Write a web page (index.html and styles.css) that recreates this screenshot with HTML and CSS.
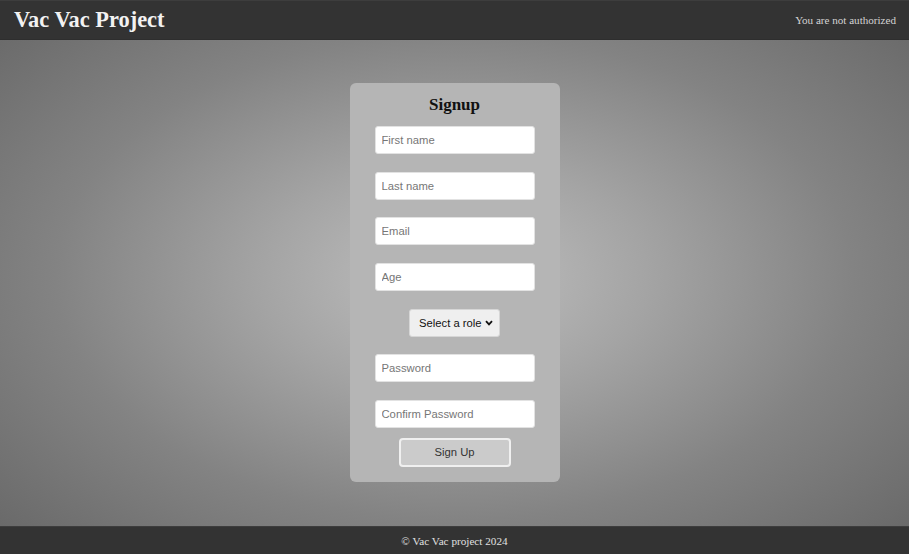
FILE: index.html
```html
<!DOCTYPE html>
<html lang="en">
<head>
<meta charset="utf-8">
<title>Vac Vac Project</title>
<link rel="stylesheet" href="styles.css">
</head>
<body>
<header class="topbar">
  <h1 class="brand">Vac Vac Project</h1>
  <span class="auth">You are not authorized</span>
</header>
<main class="content">
  <div class="card">
    <h2 class="card-title">Signup</h2>
    <form class="form">
      <input class="field" type="text" placeholder="First name">
      <input class="field" type="text" placeholder="Last name">
      <input class="field" type="email" placeholder="Email">
      <input class="field" type="number" placeholder="Age">
      <select class="role">
        <option>Select a role</option>
        <option>Admin</option>
        <option>User</option>
      </select>
      <input class="field" type="password" placeholder="Password">
      <input class="field" type="password" placeholder="Confirm Password">
      <button class="submit" type="button">Sign Up</button>
    </form>
  </div>
</main>
<footer class="footer">© Vac Vac project 2024</footer>
</body>
</html>
```

FILE: styles.css
```css
* { box-sizing: border-box; }
html, body { height: 100%; }
body {
  margin: 0;
  display: flex;
  flex-direction: column;
  font-family: "Liberation Serif", "Times New Roman", serif;
  background: radial-gradient(ellipse at center, #c0c0c0 0%, #a4a4a4 30%, #838383 62%, #666666 100%);
}
.topbar {
  height: 40px;
  flex: 0 0 40px;
  background: #333333;
  border-top: 1px solid #3d3d3d;
  border-bottom: 1px solid #2e2e2e;
  display: flex;
  align-items: center;
  justify-content: space-between;
  padding: 0 13px 0 14px;
}
.brand {
  margin: 0;
  font-size: 22.4px;
  font-weight: bold;
  color: #f2f2f2;
  line-height: 1;
}
.auth {
  font-size: 11.1px;
  color: #d4d4d4;
}
.content {
  flex: 1;
  display: flex;
  align-items: center;
  justify-content: center;
  padding-bottom: 1px;
}
.card {
  width: 210px;
  background: #b5b5b5;
  border-radius: 6px;
  padding: 11px 25px 15px;
  display: flex;
  flex-direction: column;
  align-items: center;
}
.card-title {
  margin: 0 0 10px;
  font-size: 17px;
  line-height: 22px;
  font-weight: bold;
  color: #111;
}
.form {
  display: flex;
  flex-direction: column;
  align-items: center;
  gap: 17.67px;
  width: 100%;
}
.field {
  width: 160px;
  height: 28px;
  border: 1px solid #e2e2e2;
  border-radius: 3px;
  background: #fff;
  padding: 0 6px;
  font-family: "Liberation Sans", Arial, sans-serif;
  font-size: 11.25px;
  color: #222;
  outline: none;
}
.field::placeholder { color: #767676; }
.role {
  -webkit-appearance: none;
  appearance: none;
  width: 91px;
  height: 28px;
  border: 1px solid #d6d6d6;
  border-radius: 3px;
  background-color: #efefef;
  background-image: url("data:image/svg+xml,%3Csvg xmlns='http://www.w3.org/2000/svg' width='8' height='6' viewBox='0 0 8 6'%3E%3Cpath d='M1 1.2L4 4.4L7 1.2' fill='none' stroke='%23111' stroke-width='1.8'/%3E%3C/svg%3E");
  background-repeat: no-repeat;
  background-position: right 6px center;
  background-size: 8px 6px;
  font-family: "Liberation Sans", Arial, sans-serif;
  font-size: 11.25px;
  color: #111;
  padding: 0 0 0 9px;
}
.submit {
  margin-top: -7.67px;
  width: 112px;
  height: 29px;
  background: #cbcbcb;
  border: 2px solid #f0f0f0;
  border-radius: 4px;
  font-family: "Liberation Sans", Arial, sans-serif;
  font-size: 11.25px;
  color: #333;
}
.footer {
  flex: 0 0 28px;
  height: 28px;
  background: #333333;
  border-top: 1px solid #3d3d3d;
  color: #e0e0e0;
  font-size: 11.2px;
  display: flex;
  align-items: center;
  justify-content: center;
}
```
